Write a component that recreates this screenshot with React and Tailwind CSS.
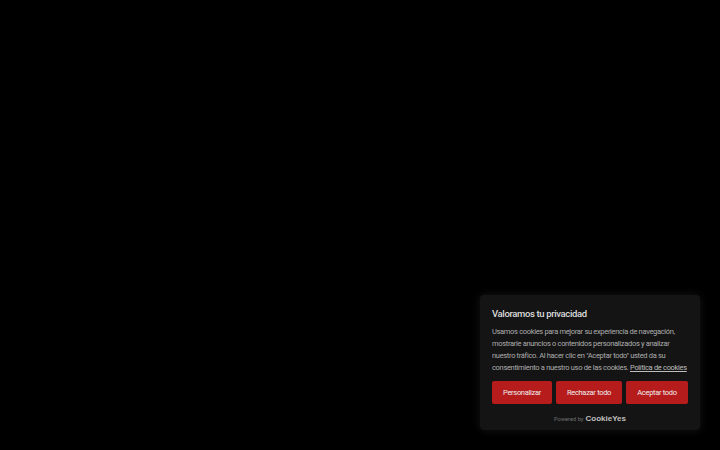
export default function App() {
  const btn = "h-[23px] rounded-[2px] bg-[#b71c1c] text-[#eeeeee] text-[7.5px] tracking-[-0.3px] pt-px flex items-center justify-center";
  return (
    <div className="w-[720px] h-[450px] bg-black flex items-end justify-end pr-5 pb-5 overflow-hidden" style={{ fontFamily: "Roboto, 'Liberation Sans', sans-serif" }}>
      <div className="w-[220px] h-[135px] bg-[#141414] rounded-[4px] shadow-[0_0_10px_rgba(70,70,70,0.3)] pt-[13px] px-3 flex flex-col">
        <h2 className="text-[9.5px] leading-[12px] font-medium tracking-[-0.36px] text-[#dcdcdc] m-0">Valoramos tu privacidad</h2>
        <p className="text-[7.5px] leading-3 tracking-[-0.32px] text-[#adadad] mt-[6px] whitespace-nowrap">
          Usamos cookies para mejorar su experiencia de navegación,<br />
          mostrarle anuncios o contenidos personalizados y analizar<br />
          nuestro tráfico. Al hacer clic en "Aceptar todo" usted da su<br />
          consentimiento a nuestro uso de las cookies. <span className="underline text-[#bdbdbd]">Política de cookies</span>
        </p>
        <div className="flex gap-1 mt-[7px]">
          <button className={btn + " w-[60px]"}>Personalizar</button>
          <button className={btn + " w-[66px]"}>Rechazar todo</button>
          <button className={btn + " w-[62px]"}>Aceptar todo</button>
        </div>
        <div className="flex items-center justify-center gap-[2px] mt-[9px]">
          <span className="text-[5.7px] text-[#707070]">Powered by</span>
          <span className="text-[8px] font-bold text-[#c0c0c0]" style={{ fontFamily: "'Liberation Sans', sans-serif" }}>CookieYes</span>
        </div>
      </div>
    </div>
  );
}
